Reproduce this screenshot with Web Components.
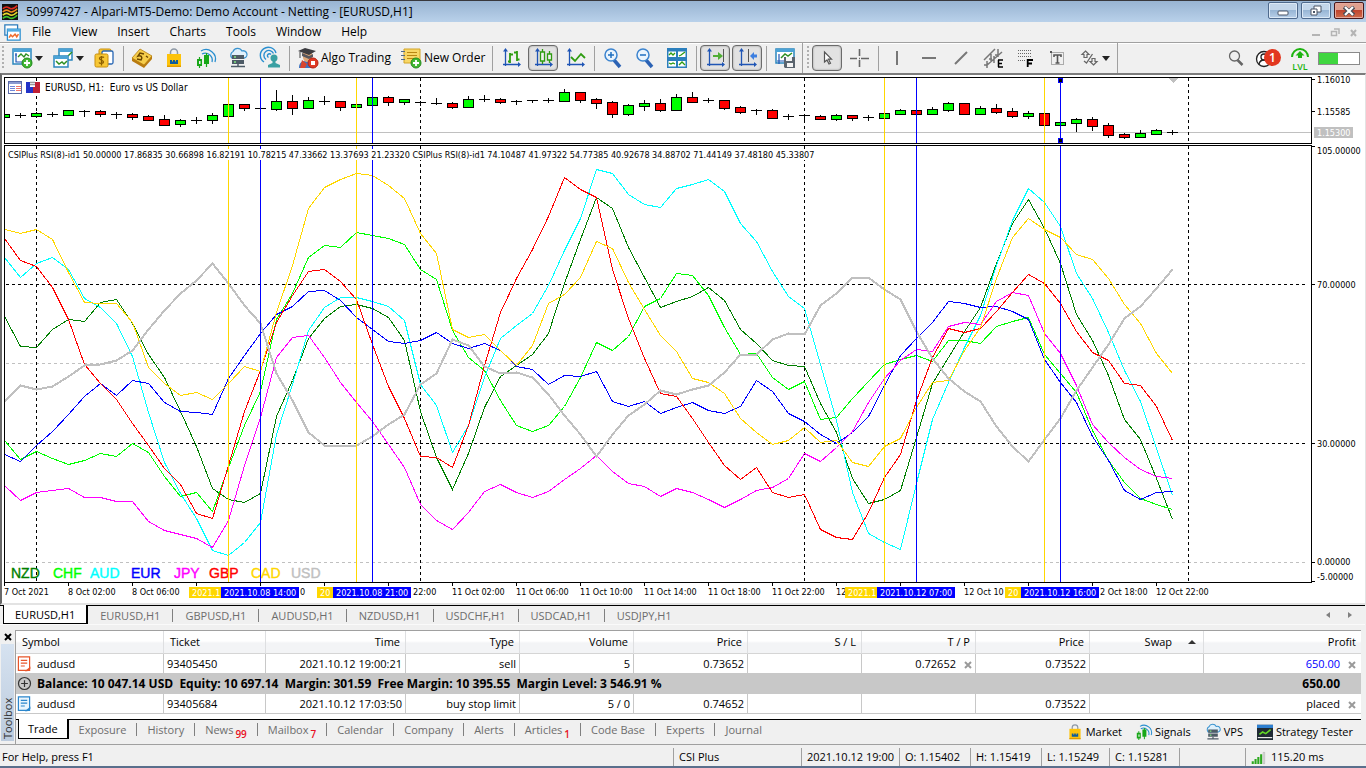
<!DOCTYPE html>
<html lang="en">
<head>
<meta charset="utf-8">
<title>50997427 - Alpari-MT5-Demo</title>
<style>
    html, body {
        margin: 0;
        min-height: 100vh;
    }
    body {
        display: flex;
        flex-direction: column;
        background: #f0f0f0;
        color: #000;
        font-family: "Open Sans", "Noto Sans", sans-serif;
        font-size: 11px;
        line-height: 16px;
        overflow: hidden;
    }
    terminal-window {
        flex: 1;
    }
</style>
</head>
<body>
<terminal-window></terminal-window>

<script>
const axes = `<path d="M4.500 3v15M2 16.500h16" fill="none" stroke="#1f55b5" stroke-width="1.300"/><path d="M4.500 0L7 3.500H2zM20 16.500l-3-2.500v5z" fill="#1f55b5"/>`;
const plus = `<circle cx="15" cy="15" r="5" fill="#41b832" stroke="#248a1c"/><path d="M15 12v6M12 15h6" stroke="#fff" stroke-width="1.800"/>`;
const bag = `<path d="M6.500 8V4.500a3.500 3.500 0 0 1 7 0V8" fill="none" stroke="#8d98a5" stroke-width="1.500"/><path d="M3 6h14v13H3z" fill="#fdc30b"/><path d="M3 17.500h14V19H3z" fill="#e09c00"/><path d="M6 16v-4h2v1.500h1V12h2v1.500h1V12h2v4z" fill="#0d5c9c"/>`;
const signal = `<path d="M6 6a7 7 0 0 1 10 8M5 3a9.500 9.500 0 0 1 14 11" fill="none" stroke="#2a8fd0" stroke-width="1.300"/><path d="M3.500 9v11M10.500 5v14" stroke="#18a818" stroke-width="1.200"/><path d="M1 11h5v7H1zM8 7h5v9H8z" fill="#18a818"/><path d="M3 13h1.500v3H3z" fill="#f0f0f0"/>`;
const cloud = `<path d="M4 10a4 4 0 0 1 1-6.500 5 5 0 0 1 9-.5 3.700 3.700 0 0 1 2.500 7z" fill="#dff0fb" stroke="#3a93cf" stroke-width="1.300"/><path d="M4 7h12v4H4zM4 12h12v4H4z" fill="#4d5b66"/><path d="M6 9h2M6 14h2" stroke="#7fe37f" stroke-width="1.500"/><path d="M10 16v2M3 18.500h14" stroke="#4d5b66" stroke-width="1.500"/>`;
const magnifier = `<path d="M11 12l6 7" stroke="#2b62b4" stroke-width="3.500"/><circle cx="8" cy="7" r="6" fill="#eaf4fd" stroke="#3c84cf" stroke-width="1.500"/>`;

const icons = {
    logo: `<rect width="20" height="20" fill="#111"/><g fill="none" stroke-width="2"><path d="M1 6q4-4 8-1t10-3" stroke="#e02a1f"/><path d="M1 10q4-4 8-1t10-3" stroke="#f08a1d"/><path d="M1 14q4-4 8-1t10-3" stroke="#e8d92a"/><path d="M1 18q4-4 8-1t10-3" stroke="#3fc02c"/></g>`,
    document: `<path d="M1 1h15v12H1z" fill="#fff" stroke="#2b7bbb" stroke-width="1.500"/><path d="M4 6h15v13H4z" fill="#fff" stroke="#2b8fd0" stroke-width="1.500"/><path d="M4 6h15v3H4z" fill="#54aee4"/><path d="M6 16l2-3 2 2 3-3 2 3 2-3" fill="none" stroke="#ef6c2c" stroke-width="1.800"/>`,
    newChart: `<path d="M1 1h18v15H1z" fill="#fff" stroke="#2b86bd" stroke-width="1.500"/><path d="M1 1h18v3H1z" fill="#4ba3d6"/><path d="M4 5v9h11M3 7h2" fill="none" stroke="#1f55b5" stroke-width="1.200"/><path d="M6 9l3-3 3 3 2-3 3 2" fill="none" stroke="#2e8f22" stroke-width="1.400"/>${plus}`,
    profiles: `<path d="M6 1h13v11H6z" fill="#fff" stroke="#2b86bd" stroke-width="1.500"/><path d="M6 1h13v3H6z" fill="#4ba3d6"/><path d="M15 8l4-4" stroke="#2e8f22" stroke-width="1.500"/><path d="M1 8h14v11H1z" fill="#fff" stroke="#2b86bd" stroke-width="1.500"/><path d="M1 8h14v3H1z" fill="#4ba3d6"/><path d="M3 13l3 3 3-2 2 2 3-3" fill="none" stroke="#2e8f22" stroke-width="1.500"/>`,
    symbols: `<rect x="5" y="1" width="12" height="12" rx="1.500" fill="#f7c736" stroke="#c98f0c"/><rect x="8" y="3" width="11" height="13" rx="1.500" fill="#fff" stroke="#2766b4" stroke-width="1.300"/><rect x="1" y="6" width="13" height="13" rx="1.500" fill="#f7c736" stroke="#c98f0c"/><path d="M10 9.500c-1-1-4.500-1-4.500 1s4 1.500 4 3.500-4 1.500-4.500.5M7.500 8v9.500" fill="none" stroke="#8a5d00" stroke-width="1.300"/>`,
    coins: `<path d="M0 10v3l12 7 8-9V8z" fill="#b97b10"/><path d="M0 10L8 1l12 7-8 9z" fill="#f6cd4b" stroke="#b57d10" stroke-width=".8"/><path d="M12 6L8 5 6 8c3-1 5 1 3 4l-4-1M14 8l2 1.500" fill="none" stroke="#6a4600" stroke-width="1.500"/>`,
    bag, signal, cloud,
    community: `<path d="M4 14a8 8 0 1 1 12-9M6 11.500a5 5 0 1 1 7.500-6M8.500 9.500a2 2 0 1 1 2.500-3" fill="none" stroke="#2a8fd0" stroke-width="1.400"/><circle cx="14" cy="10" r="3.500" fill="#3aa0a3"/><path d="M12.500 12h3v3l4.500 2v2.500H8V17l4.500-2z" fill="#3aa0a3"/>`,
    algo: `<path d="M1 20c0-6 3-7 8-7s7 3 7 7z" fill="#3b72c0"/><path d="M5 5h9v5q-2 4-5 4t-4-4z" fill="#e0a97a"/><path d="M4 12l5 4-2 4H2z" fill="#d8452f"/><path d="M0 3l7-3 11 3-7 4z" fill="#3c3c40"/><path d="M4 5l7 3 4-2v3l-4 2-7-3z" fill="#58585e"/><path d="M2 4v6" stroke="#444"/><circle cx="15" cy="15" r="5" fill="#e03a25" stroke="#b82312"/><path d="M13 13h4v4h-4z" fill="#fff"/>`,
    newOrder: `<path d="M3 1h16v12l-3 2H3z" fill="#f8d766" stroke="#d2a426"/><path d="M6 4.500h10M6 7.500h10M6 10.500h7" stroke="#b88713" stroke-width="1.200"/><path d="M0 3.500h4M0 7.500h4M0 11.500h4" stroke="#4f6b8a" stroke-width="1.200"/>${plus}`,
    bars: `${axes}<path d="M9 5v10M7 13.500h2M9 6.500h3M16 3v10M13 4.500h3M16 11.500h2.500" stroke="#2e9c10" stroke-width="1.800" fill="none"/>`,
    candles: `${axes}<path d="M9.500 1v15M16.500 3v12" stroke="#2e9c10" stroke-width="1.300"/><path d="M7.500 4h4v9h-4zM14.500 6h4v6h-4z" fill="#f0f0f0" stroke="#2e9c10" stroke-width="1.300"/>`,
    line: `${axes}<path d="M6 9l4 4 6-7 4 4" fill="none" stroke="#2e9c10" stroke-width="1.800"/>`,
    zoomIn: `${magnifier}<path d="M8 4v6M5 7h6" stroke="#1f6fc0" stroke-width="1.500"/>`,
    zoomOut: `${magnifier}<path d="M5 7h6" stroke="#1f6fc0" stroke-width="1.500"/>`,
    tile: `<path d="M0 0h20v20H0z" fill="#2b7fbd"/><path d="M1.500 3.500H9V9H1.500zM11 3.500h7.500V9H11zM1.500 13H9v5.500H1.500zM11 13h7.500v5.500H11z" fill="#fff"/><path d="M2 7l2-2 2 2 2-2M12 8l2-1 4-3M2 15l2 1 2-1 2 1M12 17l3-3 3 3" fill="none" stroke="#2e9c10" stroke-width="1.300"/>`,
    scroll: `${axes}<path d="M18.500 1v13" stroke="#555"/><path d="M8 7h5V4l5 4-5 4V9H8z" fill="#4fae35"/>`,
    shift: `${axes}<path d="M11.500 1v13" stroke="#555"/><path d="M20 9.500h-3V12l-4-4 4-4v2.500h3z" fill="#3d7fe0"/>`,
    save: `<path d="M1 1h18v14H1z" fill="#fff" stroke="#2b86bd" stroke-width="1.500"/><path d="M1 1h18v3H1z" fill="#4ba3d6"/><path d="M4 6v10M2 13h7" stroke="#1f55b5" stroke-width="1.200"/><path d="M6 10l4-4 3 2 4-3" fill="none" stroke="#2e8f22" stroke-width="1.500"/><path d="M9 9h11v11H10l-1-1z" fill="#5a646e"/><path d="M11 9h6v4h-6zM12 15h6v4h-6z" fill="#f4f4f4"/>`,
    cursor: `<path d="M7.500 4v10l2.500-2 2 4 1.500-.8-2-4h3z" fill="#fff" stroke="#555" stroke-width="1.200"/>`,
    cross: `<path d="M10.500 1v7M10.500 12v7M1 10.500h7M12 10.500h8M10 10.500h1" stroke="#666" stroke-width="1.600"/>`,
    vline: `<path d="M10 3v14" stroke="#777" stroke-width="2"/>`,
    hline: `<path d="M3 10h14" stroke="#777" stroke-width="2"/>`,
    trend: `<path d="M4 16L16 4" stroke="#777" stroke-width="2"/>`,
    channel: `<path d="M1 12L12 1M3 18L19 4M4 13v7M1 17h3M8 6v8M11 8v7M15 1v8M12 7h3M6 11h3" stroke="#777" stroke-width="1.500"/><path d="M15 12h5M15 15.500h4M15 19h5M15.500 12v7" stroke="#000" stroke-width="1.500"/>`,
    fibo: `<path d="M3 2.500h14M3 5.500h14M3 8.500h14M3 12.500h8" stroke="#666" stroke-dasharray="1 1"/><path d="M12.700 19v-7H18M12 15.500h5" fill="none" stroke="#000" stroke-width="1.800"/>`,
    textLabel: `<path d="M4.500 4.500h12v12h-12z" fill="none" stroke="#666" stroke-dasharray="1 1"/><path d="M3 3h2v2H3z" fill="#555"/><path d="M7 9V7h7v2M10.500 7v8M8.500 15h4" fill="none" stroke="#555" stroke-width="1.600"/>`,
    shapes: `<path d="M6.500 3l3.500 3.500H8v3H5v-3H3zM14.500 17l3.500-3.500h-2v-3h-3v3h-2z" fill="none" stroke="#666" stroke-width="1.200"/><path d="M5 13l2.500 2 6-9" fill="none" stroke="#666" stroke-width="1.300"/>`,
    search: `<path d="M11.500 12l5 5" stroke="#666" stroke-width="2.500"/><circle cx="8.500" cy="8" r="5" fill="none" stroke="#666" stroke-width="1.300"/>`,
    account: `<circle cx="6" cy="11" r="7.500" fill="#fff" stroke="#222" stroke-width="1.300"/><circle cx="6" cy="9" r="3" fill="none" stroke="#222" stroke-width="1.300"/><path d="M1 16q1-4 5-4t5 4" fill="none" stroke="#222" stroke-width="1.300"/>`,
    level: `<path d="M2 9a8 8 0 0 1 16 0" fill="none" stroke="#1db410" stroke-width="2"/><path d="M10 3l4.500 4.500H12V10H8V7.500H5.500z" fill="#1db410"/>`,
    tester: `<rect width="20" height="19" y="1" fill="#1f2a33"/><path d="M0 1h20v4H0z" fill="#2d7fd0"/><path d="M3 13l4-3 4 2 6-5" fill="none" stroke="#63d827" stroke-width="2"/><path d="M1 17h18" stroke="#e8e8e8" stroke-width="1.500"/>`,
    sellOrder: `<path d="M3 1h14v17H3z" fill="#fff" stroke="#e8552a" stroke-width="1.500"/><path d="M6 5.500h8M6 9h8M6 12.500h5" stroke="#e8552a" stroke-width="1.500"/><path d="M11 19l7-6v3l-4 3z" fill="#e8552a"/>`,
    buyOrder: `<path d="M3 1h14v17H3z" fill="#eaf5fd" stroke="#2b86cc" stroke-width="1.500"/><path d="M6 5.500h8M6 9h8M6 12.500h5" stroke="#2b86cc" stroke-width="1.500"/><path d="M11 19l7-6v3l-4 3z" fill="#2b86cc"/>`,
    expand: `<circle cx="10" cy="10" r="8" fill="none" stroke="#333" stroke-width="1.600"/><path d="M10 5.500v9M5.500 10h9" stroke="#333" stroke-width="1.600"/>`,
    connection: `<path d="M1 20v-4h3v4zM5 20v-7h3v7zM9 20v-10h3v10zM13 20V6h3v14z" fill="#2da81f"/><path d="M17.500 19.500V3.500h2v16z" fill="#fff" stroke="#aaa"/>`,
};

const svg = (name, size) => `<svg width="${size}" height="${size}" viewBox="0 0 20 20" aria-hidden="true">${icons[name]}</svg>`;

class UiIcon extends HTMLElement {
    connectedCallback() {
        const shadow = this.attachShadow({ mode: "open" });
        shadow.innerHTML = `
            <style>
                :host { display: inline-flex; flex: none; }
                svg { display: block; overflow: visible; }
            </style>
            ${svg(this.getAttribute("name"), this.getAttribute("size") || 20)}`;
    }
}
customElements.define("ui-icon", UiIcon);


class TitleBar extends HTMLElement {
    connectedCallback() {
        const shadow = this.attachShadow({ mode: "open" });
        shadow.innerHTML = `
            <style>
                :host {
                    display: flex;
                    box-sizing: border-box;
                    height: 22px;
                    padding: 1px 2px 0;
                    align-items: center;
                    gap: 8px;
                    font-size: 12px;
                    border-top: 1px solid #38383c;
                    background: linear-gradient(#98b4d2, #b9d1ea);
                }
                .text { flex: 1; }
                .buttons { display: flex; gap: 3px; align-self: flex-start; }
                button {
                    width: 30px;
                    height: 17px;
                    padding: 0;
                    display: flex;
                    align-items: center;
                    justify-content: center;
                    border: 1px solid #4f6a8d;
                    border-radius: 2px;
                    box-shadow: inset 0 0 0 1px #dce9f6;
                    background: linear-gradient(#c3d6ea 45%, #98b6d5 50%, #b8cfe8);
                }
                button.close {
                    border-color: #47181c;
                    box-shadow: inset 0 0 0 1px #e6a99c;
                    background: linear-gradient(#e0a08f 45%, #c0452f 50%, #cf6c4c);
                }
            </style>
            <ui-icon name="logo" size="16"></ui-icon>
            <span class="text"><slot></slot></span>
            <div class="buttons">
                <button aria-label="Minimize"><svg width="12" height="10"><rect x="1" y="5" width="10" height="4" rx="1" fill="#fff" stroke="#4a5566"/></svg></button>
                <button aria-label="Restore"><svg width="12" height="11"><path d="M4 1h7v6H4z" fill="#fff" stroke="#4a5566"/><path d="M1 4h6v6H1z" fill="#fff" stroke="#4a5566"/><path d="M3 6h2v2H3z" fill="#4a5566"/></svg></button>
                <button class="close" aria-label="Close"><svg width="12" height="10"><path d="M1 1l10 8M11 1L1 9" stroke="#4a4d58" stroke-width="4"/><path d="M2 1l8 8M10 1L2 9" stroke="#fff" stroke-width="2.200"/></svg></button>
            </div>`;
    }
}
customElements.define("title-bar", TitleBar);


class MenuBar extends HTMLElement {
    connectedCallback() {
        const shadow = this.attachShadow({ mode: "open" });
        const items = this.getAttribute("items").split(",");
        shadow.innerHTML = `
            <style>
                :host {
                    display: flex;
                    height: 20px;
                    padding: 0 8px 0 4px;
                    align-items: center;
                    gap: 1px;
                    background: #f0f0f0;
                }
                nav { flex: 1; display: flex; }
                button {
                    padding: 0 10px;
                    border: 0;
                    background: none;
                    color: inherit;
                    font: inherit;
                    font-size: 12px;
                }
                .mdi { display: flex; gap: 9px; }
                .mdi button { padding: 0; display: flex; }
            </style>
            <ui-icon name="document" size="17"></ui-icon>
            <nav>${items.map(item => `<button>${item}</button>`).join("")}</nav>
            <div class="mdi">
                <button aria-label="Minimize chart"><svg width="10" height="9"><path d="M1 7h8" stroke="#b4b4b4" stroke-width="2"/></svg></button>
                <button aria-label="Restore chart"><svg width="10" height="9"><path d="M1.500 3.500h5v4h-5zM4 1h5v5" fill="none" stroke="#b4b4b4" stroke-width="1.500"/></svg></button>
                <button aria-label="Close chart"><svg width="9" height="9"><path d="M2 2l5 6M7 2L2 8" stroke="#b4b4b4" stroke-width="2"/></svg></button>
            </div>`;
    }
}
customElements.define("menu-bar", MenuBar);


class ToolButton extends HTMLElement {
    connectedCallback() {
        const shadow = this.attachShadow({ mode: "open" });
        const arrow = this.hasAttribute("menu") ? `<svg class="arrow" width="8" height="5"><path d="M0 0h8L4 5z" fill="#222"/></svg>` : "";
        const text = this.textContent ? `class="text"` : "";
        shadow.innerHTML = `
            <style>
                :host { display: inline-flex; }
                button {
                    box-sizing: border-box;
                    height: 26px;
                    min-width: 30px;
                    padding: 0 4px;
                    display: flex;
                    align-items: center;
                    gap: 3px;
                    border: 1px solid transparent;
                    border-radius: 4px;
                    background: none;
                    color: inherit;
                    font: inherit;
                    font-size: 12px;
                    white-space: nowrap;
                }
                button.text { padding-right: 2px; }
                :host([pressed]) button {
                    border-color: #6b6b6b;
                    background: #e2e2e2;
                    box-shadow: inset 0 0 2px #8c8c8c;
                }
            </style>
            <button ${text} aria-label="${this.getAttribute("label")}"${this.hasAttribute("pressed") ? ` aria-pressed="true"` : ""}>
                <ui-icon name="${this.getAttribute("icon")}"></ui-icon>${arrow}<slot></slot>
            </button>`;
    }
}
customElements.define("tool-button", ToolButton);


class ToolBar extends HTMLElement {
    connectedCallback() {
        const shadow = this.attachShadow({ mode: "open" });
        shadow.innerHTML = `
            <style>
                :host {
                    display: flex;
                    box-sizing: border-box;
                    height: 31px;
                    align-items: center;
                    gap: 2px;
                    padding-right: 6px;
                    border-top: 1px solid #a0a0a0;
                    box-shadow: inset 0 1px #fff;
                    background: #f0f0f0;
                }
                .sep { width: 1px; height: 25px; margin: 0 1px; border-right: 1px solid #a0a0a0; }
                .end { height: 30px; border-left: 1px solid #a0a0a0; }
                .grip { width: 2px; height: 24px; margin: 0 1px 0 2px; background: repeating-linear-gradient(#b0b0b0 0 2px, transparent 2px 4px); }
                .menus { display: flex; }
                .right { margin-left: auto; display: flex; align-items: center; gap: 2px; }
                .account, .level { position: relative; display: flex; }
                .badge {
                    position: absolute;
                    top: 4px;
                    right: 2px;
                    width: 17px;
                    height: 17px;
                    border-radius: 50%;
                    background: #e2371f;
                    color: #fff;
                    text-align: center;
                    font-size: 12px;
                    font-weight: 600;
                    line-height: 17px;
                }
                .lvl {
                    position: absolute;
                    left: 0;
                    right: 0;
                    bottom: 0;
                    color: #1db410;
                    text-align: center;
                    font-size: 9px;
                    font-weight: 600;
                    line-height: 9px;
                }
                .meter { width: 40px; height: 11px; margin-left: 1px; border: 1px solid #8a8a8a; background: linear-gradient(to right, #3fd63f 19px, #fff 19px); }
            </style>
            <span class="grip"></span>
            <div class="menus">
                <tool-button icon="newChart" label="New chart" menu></tool-button>
                <tool-button icon="profiles" label="Profiles" menu></tool-button>
                <tool-button icon="symbols" label="Symbols"></tool-button>
            </div>
            <span class="sep"></span>
            <tool-button icon="coins" label="Deposit"></tool-button>
            <tool-button icon="bag" label="Market"></tool-button>
            <tool-button icon="signal" label="Signals"></tool-button>
            <tool-button icon="cloud" label="Virtual hosting"></tool-button>
            <tool-button icon="community" label="Community"></tool-button>
            <span class="sep"></span>
            <tool-button icon="algo" label="Algo Trading">Algo Trading</tool-button>
            <tool-button icon="newOrder" label="New Order">New Order</tool-button>
            <span class="sep"></span>
            <tool-button icon="bars" label="Bar chart"></tool-button>
            <tool-button icon="candles" label="Candlesticks" pressed></tool-button>
            <tool-button icon="line" label="Line chart"></tool-button>
            <span class="sep"></span>
            <tool-button icon="zoomIn" label="Zoom in"></tool-button>
            <tool-button icon="zoomOut" label="Zoom out"></tool-button>
            <tool-button icon="tile" label="Tile windows"></tool-button>
            <span class="sep"></span>
            <tool-button icon="scroll" label="Auto scroll" pressed></tool-button>
            <tool-button icon="shift" label="Chart shift" pressed></tool-button>
            <span class="sep"></span>
            <tool-button icon="save" label="Save template"></tool-button>
            <span class="end"></span>
            <span class="grip"></span>
            <tool-button icon="cursor" label="Cursor" pressed></tool-button>
            <tool-button icon="cross" label="Crosshair"></tool-button>
            <span class="sep"></span>
            <tool-button icon="vline" label="Vertical line"></tool-button>
            <tool-button icon="hline" label="Horizontal line"></tool-button>
            <tool-button icon="trend" label="Trendline"></tool-button>
            <tool-button icon="channel" label="Equidistant channel"></tool-button>
            <tool-button icon="fibo" label="Fibonacci"></tool-button>
            <tool-button icon="textLabel" label="Text"></tool-button>
            <tool-button icon="shapes" label="Objects" menu></tool-button>
            <span class="end"></span>
            <div class="right">
                <tool-button icon="search" label="Search"></tool-button>
                <div class="account"><tool-button icon="account" label="Account"></tool-button><span class="badge">1</span></div>
                <div class="level"><tool-button icon="level" label="Level"></tool-button><span class="lvl">LVL</span></div>
                <div class="meter"></div>
            </div>`;
    }
}
customElements.define("tool-bar", ToolBar);


// one bar every 16px; [high, body top, body bottom, low, up / down / flat]
const BAR = 16;
const candles = [
    [114,114,117,117,"u"],[113,115,115,117,"f"],[112,113,116,117,"u"],[112,114,114,116,"f"],[110,110,115,115,"u"],
    [110,111,111,116,"f"],[110,111,114,116,"d"],[112,114,114,118,"f"],[113,114,117,119,"d"],[115,116,120,120,"d"],
    [115,119,125,125,"d"],[119,120,124,126,"u"],[117,120,120,123,"f"],[113,115,120,123,"u"],[103,104,116,116,"u"],
    [104,104,108,110,"d"],[107,108,108,109,"f"],[90,101,109,110,"u"],[95,101,108,114,"d"],[97,100,108,108,"u"],
    [96,101,101,104,"f"],[101,101,107,110,"d"],[104,104,107,107,"u"],[97,97,105,105,"u"],[96,97,102,105,"d"],
    [99,99,102,104,"u"],[101,102,102,105,"f"],[98,103,103,104,"f"],[102,103,107,108,"d"],[96,99,107,107,"u"],
    [95,99,99,101,"f"],[98,99,102,103,"d"],[100,101,101,104,"f"],[100,100,100,102,"f"],[98,100,100,102,"f"],
    [89,92,101,101,"u"],[92,92,100,102,"d"],[98,99,103,108,"d"],[101,102,114,117,"d"],[104,105,114,115,"u"],
    [100,103,106,110,"u"],[99,103,110,111,"d"],[94,97,110,110,"u"],[92,97,102,102,"d"],[98,100,100,102,"f"],
    [100,100,108,109,"d"],[106,107,112,113,"d"],[109,110,110,114,"f"],[109,110,118,118,"d"],[114,116,116,119,"f"],
    [114,115,115,120,"f"],[115,116,119,119,"d"],[114,115,119,120,"u"],[115,115,118,120,"d"],[115,117,117,120,"f"],
    [113,113,118,118,"u"],[109,110,114,114,"u"],[108,110,114,115,"d"],[107,109,114,114,"u"],[102,103,110,111,"u"],
    [103,103,114,114,"d"],[106,108,114,114,"u"],[104,108,112,113,"d"],[108,111,116,117,"d"],[111,113,116,118,"u"],
    [113,113,125,125,"d"],[121,122,125,125,"u"],[118,119,123,131,"u"],[117,119,126,130,"d"],[123,125,135,137,"d"],
    [133,134,137,138,"d"],[130,133,137,137,"u"],[129,130,134,134,"u"],[130,132,132,134,"f"],
];

// name, colour, legend x, one height per bar
const series = [
    ["NZD", "#008000", 11, [316,346,347,329,319,321,302,299,323,354,377,411,446,488,499,502,493,416,380,338,318,306,304,308,317,340,411,457,489,453,407,376,365,354,333,283,239,197,208,247,277,307,301,296,287,300,329,343,360,365,366,403,432,478,503,499,490,437,383,357,331,307,263,223,199,228,263,314,340,375,419,439,478,519]],
    ["CHF", "#00ff00", 53, [440,459,451,458,464,460,453,456,443,452,476,496,492,511,467,425,391,319,293,257,245,247,232,235,238,244,269,279,330,357,370,400,425,431,425,406,377,342,350,336,306,298,273,275,295,327,354,353,377,389,381,419,417,398,381,364,359,355,361,340,340,343,326,321,317,354,373,392,430,460,482,498,504,509]],
    ["AUD", "#00ffff", 90, [257,277,263,257,269,298,307,323,356,412,462,493,518,550,555,542,522,434,384,330,307,297,297,301,306,320,384,405,452,425,377,338,325,313,285,250,218,169,173,194,204,207,188,184,179,191,223,241,271,296,308,364,420,492,533,542,549,483,419,382,347,315,265,220,188,202,226,273,298,332,370,401,448,495]],
    ["EUR", "#0000ff", 131, [454,461,445,431,414,396,383,395,380,383,402,411,412,414,378,355,333,314,306,291,290,300,317,329,341,343,340,332,343,348,343,350,366,369,384,375,376,371,401,406,401,413,407,402,410,413,406,380,391,413,421,434,443,432,416,385,355,338,322,301,303,307,306,311,319,359,382,402,436,460,490,499,492,491]],
    ["JPY", "#ff00ff", 174, [485,500,492,490,488,497,497,501,501,521,530,534,538,547,520,465,417,357,337,335,357,382,402,421,444,467,504,520,529,512,491,484,492,497,491,479,468,455,471,483,486,496,488,492,499,507,499,490,487,478,453,461,447,431,402,378,360,349,351,326,322,324,301,292,295,333,353,385,424,442,457,469,476,478]],
    ["GBP", "#ff0000", 209, [238,260,266,287,319,364,383,399,423,445,468,484,513,518,465,411,370,322,295,271,269,281,299,344,386,418,456,457,467,425,365,312,278,249,216,177,189,197,269,318,358,393,396,418,442,465,479,467,492,497,494,529,537,539,512,477,454,400,357,328,332,328,311,292,274,283,303,331,352,360,383,385,406,440]],
    ["CAD", "#ffd700", 251, [229,233,229,239,272,302,303,303,322,367,383,395,392,399,383,366,371,312,265,208,187,179,173,175,185,198,233,253,329,337,334,350,365,345,303,294,277,241,248,282,309,335,351,378,382,393,418,432,444,440,427,442,440,462,466,446,438,407,382,380,350,327,278,237,218,229,237,254,259,278,304,323,353,373]],
    ["USD", "#c0c0c0", 291, [401,385,389,386,376,365,364,360,350,329,310,293,280,263,283,305,323,373,400,432,445,445,445,436,424,414,384,373,339,345,366,373,372,377,394,415,434,456,434,415,404,390,394,389,385,372,354,354,339,333,334,305,293,277,277,289,299,331,358,378,391,401,426,446,461,439,418,390,367,344,318,306,288,269]],
];

const days = [36, 420, 804, 1188];
const sessions = [[228, "gold"], [260, "blue"], [356, "gold"], [372, "blue"], [884, "gold"], [916, "blue"], [1044, "gold"], [1060, "blue"]];
const colors = { gold: "#ffd700", blue: "#0000ff", u: "#00ff00", d: "#ff0000" };

const vertical = (x, y1, y2, color, dash = "") =>
    `<line x1="${x + .5}" x2="${x + .5}" y1="${y1}" y2="${y2}" stroke="${color}" ${dash && `stroke-dasharray="${dash}"`}/>`;
const level = (y, color) =>
    `<line x1="0" x2="100%" y1="${y + .5}" y2="${y + .5}" stroke="${color}" stroke-dasharray="3 3"/>`;

class PriceChart extends HTMLElement {
    connectedCallback() {
        const shadow = this.attachShadow({ mode: "open" });
        shadow.innerHTML = `
            <style>
                :host {
                    display: grid;
                    grid-template-columns: 1fr 52px;
                    padding: 2px 1px 1px 2px;
                    border: solid #696969;
                    border-width: 2px 1px 2px 2px;
                    border-top-color: #7c7c7c;
                    border-right-color: #e3e3e3;
                    border-bottom-color: #e3e3e3;
                    background: #fff;
                    font-family: "DejaVu Sans Condensed", "DejaVu Sans", sans-serif;
                    font-size: 9px;
                }
                svg { display: block; width: 100%; grid-column: 1; }
                .price, .indicator { box-sizing: border-box; border: 1px solid #000; }
                .price { height: 67px; margin-bottom: 1px; }
                .indicator { height: 438px; }
                .dates { height: 19px; overflow: visible; }
                .scale { grid-column: 2; grid-row: 1 / 4; height: 100%; overflow: visible; }
                .legend { font-family: "Liberation Sans", sans-serif; font-size: 14px; }
                .caption { font-size: 10px; }
                g { shape-rendering: crispEdges; }
            </style>
            <svg class="price"><g transform="translate(-5,-78)">${this.price()}</g></svg>
            <svg class="indicator"><g transform="translate(-5,-146)">${this.indicator()}</g></svg>
            <svg class="dates"><g transform="translate(-4,-583)">${this.dates()}</g></svg>
            <svg class="scale"><g transform="translate(-1312,-77)">${this.scale()}</g></svg>`;
    }

    price() {
        const bars = candles.map(([high, top, bottom, low, kind], i) => {
            const x = 4 + i * BAR;
            const wick = vertical(x, high, low + 1, "#000");
            if (kind === "f") {
                return wick + `<rect x="${x - 5}" y="${top}" width="11" height="1"/>`;
            }
            return wick + `<rect x="${x - 4.5}" y="${top + .5}" width="10" height="${bottom - top}" fill="${colors[kind]}" stroke="#000"/>`;
        }).join("");
        return `
            <line x1="0" x2="3000" y1="132.500" y2="132.500" stroke="#c0c0c0"/>
            ${days.map(x => vertical(x, 78, 143, "#000", "3 3")).join("")}
            ${bars}
            ${sessions.map(([x, c]) => vertical(x, 78, 143, colors[c])).join("")}
            <rect x="1058" y="78" width="5" height="5" fill="#0000ff"/><rect x="1058" y="138" width="5" height="5" fill="#0000ff"/>
            <rect x="1059" y="79" width="3" height="3"/><rect x="1059" y="139" width="3" height="3"/>
            <path d="M1168 78h10l-5 5z" fill="#c0c0c0"/>
            ${this.smallIcons()}
            <text class="caption" x="45" y="91">EURUSD, H1:&#160; Euro vs US Dollar</text>`;
    }

    smallIcons() {
        return `
            <path d="M8.500 81.500h13v12h-13z" fill="#fff" stroke="#5a6aa8"/><path d="M9 82h12v2H9z" fill="#8a9ad0"/>
            <path d="M10 86.500h5M10 88.500h5M10 90.500h5" stroke="#6f86d8"/><path d="M16 86.500h5M16 88.500h5M16 90.500h5" stroke="#ef7468"/>
            <path d="M26 82h4v5h3v6h-7z" fill="#2233c8"/><path d="M35 82h5v11h-7v-6h2z" fill="#c02036"/><path d="M30 81h5v5h-5z" fill="#dfe2ea"/><path d="M30 82.500h5M30 84.500h5" stroke="#999"/>`;
    }

    indicator() {
        const lines = series.map(([name, color, , ys]) => {
            const points = ys.map((y, i) => `${4.5 + i * BAR},${y + .5}`).join(" ");
            return `<polyline points="${points}" fill="none" stroke="${color}" stroke-width="${name === "USD" ? 2 : 1}"/>`;
        }).join("");
        const names = series.map(([name, color, x]) => `<text class="legend" x="${x}" y="578" fill="${color}" stroke="${color}" stroke-width=".4">${name}</text>`).join("");
        return `
            ${level(284, "#000")}${level(443, "#000")}${level(363, "#c0c0c0")}${level(562, "#c0c0c0")}
            ${days.map(x => vertical(x, 146, 582, "#000", "3 3")).join("")}
            ${lines}
            ${names}
            ${sessions.map(([x, c]) => vertical(x, 146, 582, colors[c])).join("")}
            <rect x="6" y="149" width="820" height="11" fill="#fff"/>
            <text x="8" y="158">${this.getAttribute("readout")}</text>`;
    }

    dates() {
        // labels next to a session tag keep only the part that the tag leaves free
        const labels = [
            [4, "7 Oct 2021"], [68, "8 Oct 02:00"], [132, "8 Oct 06:00"], [300, "0"], [413, "22:00"],
            [452, "11 Oct 02:00"], [516, "11 Oct 06:00"], [580, "11 Oct 10:00"], [644, "11 Oct 14:00"],
            [708, "11 Oct 18:00"], [772, "11 Oct 22:00"], [836, "12"], [964, "12 Oct 10"],
            [1100, "2 Oct 18:00"], [1156, "12 Oct 22:00"],
        ];
        const tags = [
            [189, 32, "2021.1", "gold"], [221, 78, "2021.10.08 14:00", "blue"], [317, 16, "20", "gold"], [333, 78, "2021.10.08 21:00", "blue"],
            [845, 32, "2021.1", "gold"], [877, 78, "2021.10.12 07:00", "blue"], [1005, 16, "20", "gold"], [1021, 78, "2021.10.12 16:00", "blue"],
        ];
        let out = "";
        for (let x = 4; x < 1188; x += BAR * 4) {
            out += vertical(x, 582, 586, "#000");
        }
        out += labels.map(([x, text]) => `<text x="${x}" y="595">${text}</text>`).join("");
        out += tags.map(([x, width, text, c]) => `<rect x="${x}" y="587" width="${width}" height="11" fill="${colors[c]}"/><text x="${x + 3}" y="596" fill="#fff">${text}</text>`).join("");
        return out;
    }

    scale() {
        const labels = [[79, "1.16010"], [111, "1.15585"], [150, "105.00000"], [284, "70.00000"], [443, "30.00000"], [561, "0.00000"], [576, "-5.00000"]];
        const ticks = [79, 111, 146, 284, 443, 562, 581];
        return ticks.map(y => `<path d="M1311 ${y + .5}h4" stroke="#000"/>`).join("")
            + labels.map(([y, text]) => `<text x="1317" y="${y + 4}">${text}</text>`).join("")
            + `<rect x="1314" y="127" width="39" height="11" fill="#c0c0c0"/><text x="1317" y="136" fill="#fff">1.15300</text>`;
    }
}
customElements.define("price-chart", PriceChart);


class TabStrip extends HTMLElement {
    connectedCallback() {
        const shadow = this.attachShadow({ mode: "open" });
        // "News:99" puts a counter after the name
        const tabs = this.getAttribute("tabs").split("|").map((tab, i) => {
            const [name, count] = tab.split(":");
            return `<button role="tab" aria-selected="${i === 0}"><span>${name}${count ? `<sub>${count}</sub>` : ""}</span></button>`;
        });
        shadow.innerHTML = `
            <style>
                :host {
                    --tab-padding: 10px;
                    display: flex;
                    box-sizing: border-box;
                    height: 20px;
                    padding-left: 2px;
                    border-top: 1px solid #000;
                    background: #f0f0f0;
                }
                :host([wide]) { --tab-padding: 12px; padding-left: 3px; }
                [role=tablist] { flex: 1; display: flex; }
                button {
                    padding: 0;
                    display: flex;
                    align-items: center;
                    border: 0;
                    background: none;
                    color: #6d6d6d;
                    font: inherit;
                    white-space: nowrap;
                }
                span { padding: 0 var(--tab-padding); line-height: 13px; border-right: 1px solid #808080; }
                button:last-child span { border: 0; }
                sub { margin-left: 2px; color: #e81123; font-size: 10px; font-weight: 600; line-height: 0; vertical-align: -4px; }
                [aria-selected=true] {
                    margin-top: -1px;
                    border: solid #000;
                    border-width: 0 2px 1px 1px;
                    background: #fff;
                    color: #000;
                }
                [aria-selected=true] span { padding: 0 calc(var(--tab-padding) - 1px); border: 0; }
            </style>
            <div role="tablist">${tabs.join("")}</div>
            <slot></slot>`;
    }
}
customElements.define("tab-strip", TabStrip);


const cross = `<svg width="8" height="8"><path d="M1 1l6 6M7 1L1 7" stroke="#9a9a9a" stroke-width="2"/></svg>`;

class TradeTable extends HTMLElement {
    connectedCallback() {
        const shadow = this.attachShadow({ mode: "open" });
        shadow.innerHTML = `
            <style>
                :host { display: block; background: #fff; }
                table { width: 100%; table-layout: fixed; border-collapse: separate; border-spacing: 0; }
                th, td {
                    box-sizing: border-box;
                    padding: 0 3px;
                    border-right: 1px solid #c8c8c8;
                    text-align: right;
                    white-space: nowrap;
                }
                th {
                    height: 23px;
                    padding: 0 5px;
                    border-right-color: #dedfe1;
                    border-bottom: 1px solid #d5d5d5;
                    background: linear-gradient(#fff 45%, #f3f4f6 55%);
                    font-weight: normal;
                }
                th.left { padding-left: 6px; }
                td { height: 20px; border-bottom: 1px solid #c8c8c8; }
                th:last-child, td:last-child { padding-right: 5px; border-right: 0; }
                .left { text-align: left; }
                .name { display: flex; align-items: center; gap: 5px; }
                td.first { padding-left: 0; }
                .close { display: inline-flex; margin-left: 8px; padding: 0; border: 0; background: none; vertical-align: -1px; }
                .profit { color: #0000ff; }
                .summary { font-size: 12px; }
                .summary .name { padding-left: 1px; }
                .summary td { border-right: 0; background: #c8c8c8; font-weight: 700; }
                .summary td:last-child { padding-right: 21px; }
                .sort { margin-left: 16px; margin-right: 2px; vertical-align: 2px; }
            </style>
            <table>
                <colgroup>
                    <col style="width:148px"><col style="width:102px"><col style="width:140px"><col style="width:114px"><col style="width:114px"><col style="width:114px">
                    <col style="width:114px"><col style="width:114px"><col style="width:114px"><col style="width:114px"><col>
                </colgroup>
                <tr>
                    <th class="left first">Symbol</th><th class="left">Ticket</th><th>Time</th><th>Type</th><th>Volume</th><th>Price</th>
                    <th>S / L</th><th>T / P</th><th>Price</th><th>Swap<svg class="sort" width="8" height="4"><path d="M0 4h8L4 0z" fill="#333"/></svg></th><th>Profit</th>
                </tr>
                <tr>
                    <td class="left first"><div class="name"><ui-icon name="sellOrder" size="16"></ui-icon>audusd</div></td><td class="left">93405450</td><td>2021.10.12 19:00:21</td><td>sell</td><td>5</td><td>0.73652</td>
                    <td></td><td>0.72652<button class="close" aria-label="Remove take profit">${cross}</button></td><td>0.73522</td><td></td><td><span class="profit">650.00</span><button class="close" aria-label="Close position">${cross}</button></td>
                </tr>
                <tr class="summary">
                    <td class="left first" colspan="10"><div class="name"><ui-icon name="expand" size="15"></ui-icon><slot></slot></div></td><td>650.00</td>
                </tr>
                <tr>
                    <td class="left first"><div class="name"><ui-icon name="buyOrder" size="16"></ui-icon>audusd</div></td><td class="left">93405684</td><td>2021.10.12 17:03:50</td><td>buy stop limit</td><td>5 / 0</td><td>0.74652</td>
                    <td></td><td></td><td>0.73522</td><td colspan="2">placed<button class="close" aria-label="Delete order">${cross}</button></td>
                </tr>
            </table>`;
    }
}
customElements.define("trade-table", TradeTable);


class ToolBox extends HTMLElement {
    connectedCallback() {
        const shadow = this.attachShadow({ mode: "open" });
        shadow.innerHTML = `
            <style>
                :host { display: flex; padding-right: 5px; }
                aside { width: 15px; display: flex; flex-direction: column; align-items: center; }
                aside button { height: 14px; padding: 0; border: 0; background: none; display: flex; align-items: center; }
                .caption {
                    flex: 1;
                    width: 13px;
                    margin-bottom: 3px;
                    padding-top: 2px;
                    box-sizing: border-box;
                    writing-mode: vertical-rl;
                    transform: rotate(180deg);
                    background: linear-gradient(#bccbdd, #d6e2f0);
                    color: #333;
                    line-height: 13px;
                }
                .content {
                    flex: 1;
                    min-width: 0;
                    display: flex;
                    flex-direction: column;
                    border-top: 1px solid #a0a0a0;
                    border-left: 1px solid #a0a0a0;
                }
                trade-table { padding-bottom: 5px; }
                .services { display: flex; align-items: center; gap: 14px; padding: 4px 8px 0 0; }
                a { display: flex; align-items: center; gap: 3px; color: inherit; text-decoration: none; }
            </style>
            <aside>
                <button aria-label="Close toolbox"><svg width="8" height="8"><path d="M1 1l6 6M7 1L1 7" stroke="#000" stroke-width="2"/></svg></button>
                <div class="caption">Toolbox</div>
            </aside>
            <div class="content">
                <trade-table><slot></slot></trade-table>
                <tab-strip tabs="Trade|Exposure|History|News:99|Mailbox:7|Calendar|Company|Alerts|Articles:1|Code Base|Experts|Journal">
                    <div class="services">
                        <a href="#market"><ui-icon name="bag" size="16"></ui-icon>Market</a>
                        <a href="#signals"><ui-icon name="signal" size="16"></ui-icon>Signals</a>
                        <a href="#vps"><ui-icon name="cloud" size="16"></ui-icon>VPS</a>
                        <a href="#tester"><ui-icon name="tester" size="16"></ui-icon>Strategy Tester</a>
                    </div>
                </tab-strip>
            </div>`;
    }
}
customElements.define("tool-box", ToolBox);


class StatusBar extends HTMLElement {
    connectedCallback() {
        const shadow = this.attachShadow({ mode: "open" });
        shadow.innerHTML = `
            <style>
                :host {
                    display: flex;
                    box-sizing: border-box;
                    height: 24px;
                    padding-top: 2px;
                    align-items: center;
                    border-top: 1px solid #a0a0a0;
                    border-bottom: 2px solid #5a6f8c;
                    background: #f0f0f0;
                }
                span {
                    box-sizing: border-box;
                    height: 18px;
                    padding-left: 5px;
                    display: flex;
                    align-items: center;
                    gap: 6px;
                    border-left: 1px solid #a0a0a0;
                    white-space: nowrap;
                }
                .help { flex: 1; padding-left: 2px; border: 0; }
            </style>
            <span class="help">For Help, press F1</span>
            <span style="width:128px">CSI Plus</span>
            <span style="width:98px">2021.10.12 19:00</span>
            <span style="width:71px">O: 1.15402</span>
            <span style="width:71px">H: 1.15419</span>
            <span style="width:68px">L: 1.15249</span>
            <span style="width:70px">C: 1.15281</span>
            <span style="width:66px"></span>
            <span style="width:121px"><ui-icon name="connection" size="14"></ui-icon>115.20 ms</span>`;
    }
}
customElements.define("status-bar", StatusBar);


class TerminalWindow extends HTMLElement {
    connectedCallback() {
        const shadow = this.attachShadow({ mode: "open" });
        shadow.innerHTML = `
            <style>
                :host { display: flex; flex-direction: column; }
                .charts { margin: 0 1px 5px 0; border-bottom: 1px solid #fafafa; }
                .scroll { display: flex; align-items: center; gap: 17px; padding-right: 12px; }
                .scroll button { padding: 0; border: 0; background: none; display: flex; }
                tool-box { flex: 1; }
            </style>
            <title-bar>50997427 - Alpari-MT5-Demo: Demo Account - Netting - [EURUSD,H1]</title-bar>
            <menu-bar items="File,View,Insert,Charts,Tools,Window,Help"></menu-bar>
            <tool-bar></tool-bar>
            <price-chart readout="CSIPlus RSI(8)-id1 50.00000 17.86835 30.66898 16.82191 10.78215 47.33662 13.37693 21.23320 CSIPlus RSI(8)-id1 74.10487 41.97322 54.77385 40.92678 34.88702 71.44149 37.48180 45.33807"></price-chart>
            <tab-strip class="charts" wide tabs="EURUSD,H1|EURUSD,H1|GBPUSD,H1|AUDUSD,H1|NZDUSD,H1|USDCHF,H1|USDCAD,H1|USDJPY,H1">
                <div class="scroll">
                    <button aria-label="Scroll left"><svg width="5" height="6"><path d="M4 0v6L0 3z" fill="#808080"/></svg></button>
                    <button aria-label="Scroll right"><svg width="5" height="6"><path d="M0 0v6l4-3z" fill="#808080"/></svg></button>
                </div>
            </tab-strip>
            <tool-box>Balance: 10 047.14 USD&#160; Equity: 10 697.14&#160; Margin: 301.59&#160; Free Margin: 10 395.55&#160; Margin Level: 3 546.91 %</tool-box>
            <status-bar></status-bar>`;
    }
}
customElements.define("terminal-window", TerminalWindow);
</script>
</body>
</html>
